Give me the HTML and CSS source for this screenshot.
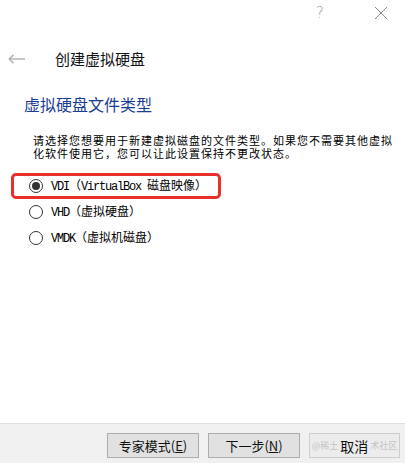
FILE: index.html
```html
<!DOCTYPE html>
<html lang="zh-CN">
<head>
<meta charset="utf-8">
<title>创建虚拟硬盘</title>
<link rel="stylesheet" href="styles.css">
</head>
<body>
<div class="dialog">
  <div class="titlebar">
    <span class="help">?</span>
    <svg class="close" width="14" height="14" viewBox="0 0 14 14"><path d="M1 1L13 13M13 1L1 13" stroke="#8a8a8a" stroke-width="1" fill="none"/></svg>
  </div>
  <div class="header">
    <svg class="back" width="18" height="10" viewBox="0 0 18 10"><path d="M1 5H17M1 5L5.5 0.8M1 5L5.5 9.2" stroke="#b4b4b4" stroke-width="1.6" fill="none"/></svg>
    <span class="title">创建虚拟硬盘</span>
  </div>
  <main class="content">
    <h1 class="heading">虚拟硬盘文件类型</h1>
    <p class="desc">请选择您想要用于新建虚拟磁盘的文件类型。如果您不需要其他虚拟<br>化软件使用它，您可以让此设置保持不更改状态。</p>
    <div class="rb-list">
      <div class="rb-row selected highlight"><span class="rb"></span><span class="label"><span class="lat">VDI</span>（<span class="lat">VirtualBox </span>磁盘映像）</span></div>
      <div class="rb-row"><span class="rb"></span><span class="label"><span class="lat">VHD</span>（虚拟硬盘）</span></div>
      <div class="rb-row"><span class="rb"></span><span class="label"><span class="lat">VMDK</span>（虚拟机磁盘）</span></div>
    </div>
  </main>
  <footer class="footer">
    <button class="btn">专家模式(<u>E</u>)</button>
    <button class="btn">下一步(<u>N</u>)</button>
    <button class="btn btn-dim"><span class="wm">@稀土</span><span class="btn-text">取消</span><span class="wm">术社区</span></button>
  </footer>
</div>
</body>
</html>
```

FILE: styles.css
```css
* { box-sizing: border-box; }
html, body { margin: 0; padding: 0; background: #fff; }
body {
  font-family: "Noto Sans CJK SC", "Noto Sans", sans-serif;
  color: #000;
}
.dialog {
  width: 405px;
  height: 463px;
  display: flex;
  flex-direction: column;
  overflow: hidden;
}
.titlebar {
  height: 25px;
  display: flex;
  align-items: center;
  justify-content: flex-end;
  padding-right: 17px;
  gap: 50px;
}
.help {
  font-family: "DejaVu Sans", sans-serif;
  font-size: 15px;
  color: #a0a0a0;
  line-height: 16px;
  font-weight: 300;
}
.close { display: block; }
.header {
  margin-top: 24px;
  height: 20px;
  display: flex;
  align-items: center;
  padding-left: 8px;
}
.back { display: block; margin-top: -1px; }
.title {
  font-size: 15px;
  line-height: 20px;
  margin-left: 29px;
  color: #111;
}
.content { flex: 1; }
.heading {
  margin: 24px 0 0 24px;
  font-size: 16px;
  line-height: 22px;
  font-weight: 400;
  color: #1a3d94;
}
.desc {
  margin: 19px 0 0 33px;
  font-size: 11px;
  letter-spacing: 1px;
  line-height: 13px;
  color: #000;
}
.rb-list {
  margin: 13px 0 0 11px;
  width: 210px;
}
.rb-row {
  position: relative;
  height: 26px;
  display: flex;
  align-items: center;
  padding-left: 18px;
}
.highlight::before {
  content: "";
  position: absolute;
  inset: 0;
  border: 3px solid #e8302c;
  border-radius: 5px;
}
.rb {
  width: 14px;
  height: 14px;
  border: 1px solid #333;
  border-radius: 50%;
  background: #fff;
  display: flex;
  align-items: center;
  justify-content: center;
  flex: none;
}
.selected .rb::after {
  content: "";
  width: 8px;
  height: 8px;
  border-radius: 50%;
  background: #333;
}
.label {
  margin-left: 8px;
  font-size: 12px;
  line-height: 16px;
  white-space: pre;
}
.lat {
  font-family: "Liberation Mono", "DejaVu Sans Mono", monospace;
  font-size: 12px;
  letter-spacing: -1.2px;
}
.footer {
  height: 40px;
  flex: none;
  background: #f0f0f0;
  border-top: 1px solid #dfdfdf;
  display: flex;
  justify-content: flex-end;
  align-items: flex-start;
  padding: 9px 5px 0 0;
  gap: 9px;
}
.btn {
  width: 92px;
  height: 25px;
  margin: 0;
  padding: 0;
  background: #e1e1e1;
  border: 1px solid #adadad;
  font-family: "Noto Sans CJK SC", sans-serif;
  font-size: 13px;
  color: #111;
  display: flex;
  align-items: center;
  justify-content: center;
}
.btn-dim {
  width: 91px;
  background: #ececec;
  border-color: #cdcdcd;
  gap: 2px;
}
.wm {
  font-size: 9px;
  color: #c4c4c4;
  white-space: nowrap;
}
.btn-text {
  font-size: 14px;
  color: #111;
}
```
